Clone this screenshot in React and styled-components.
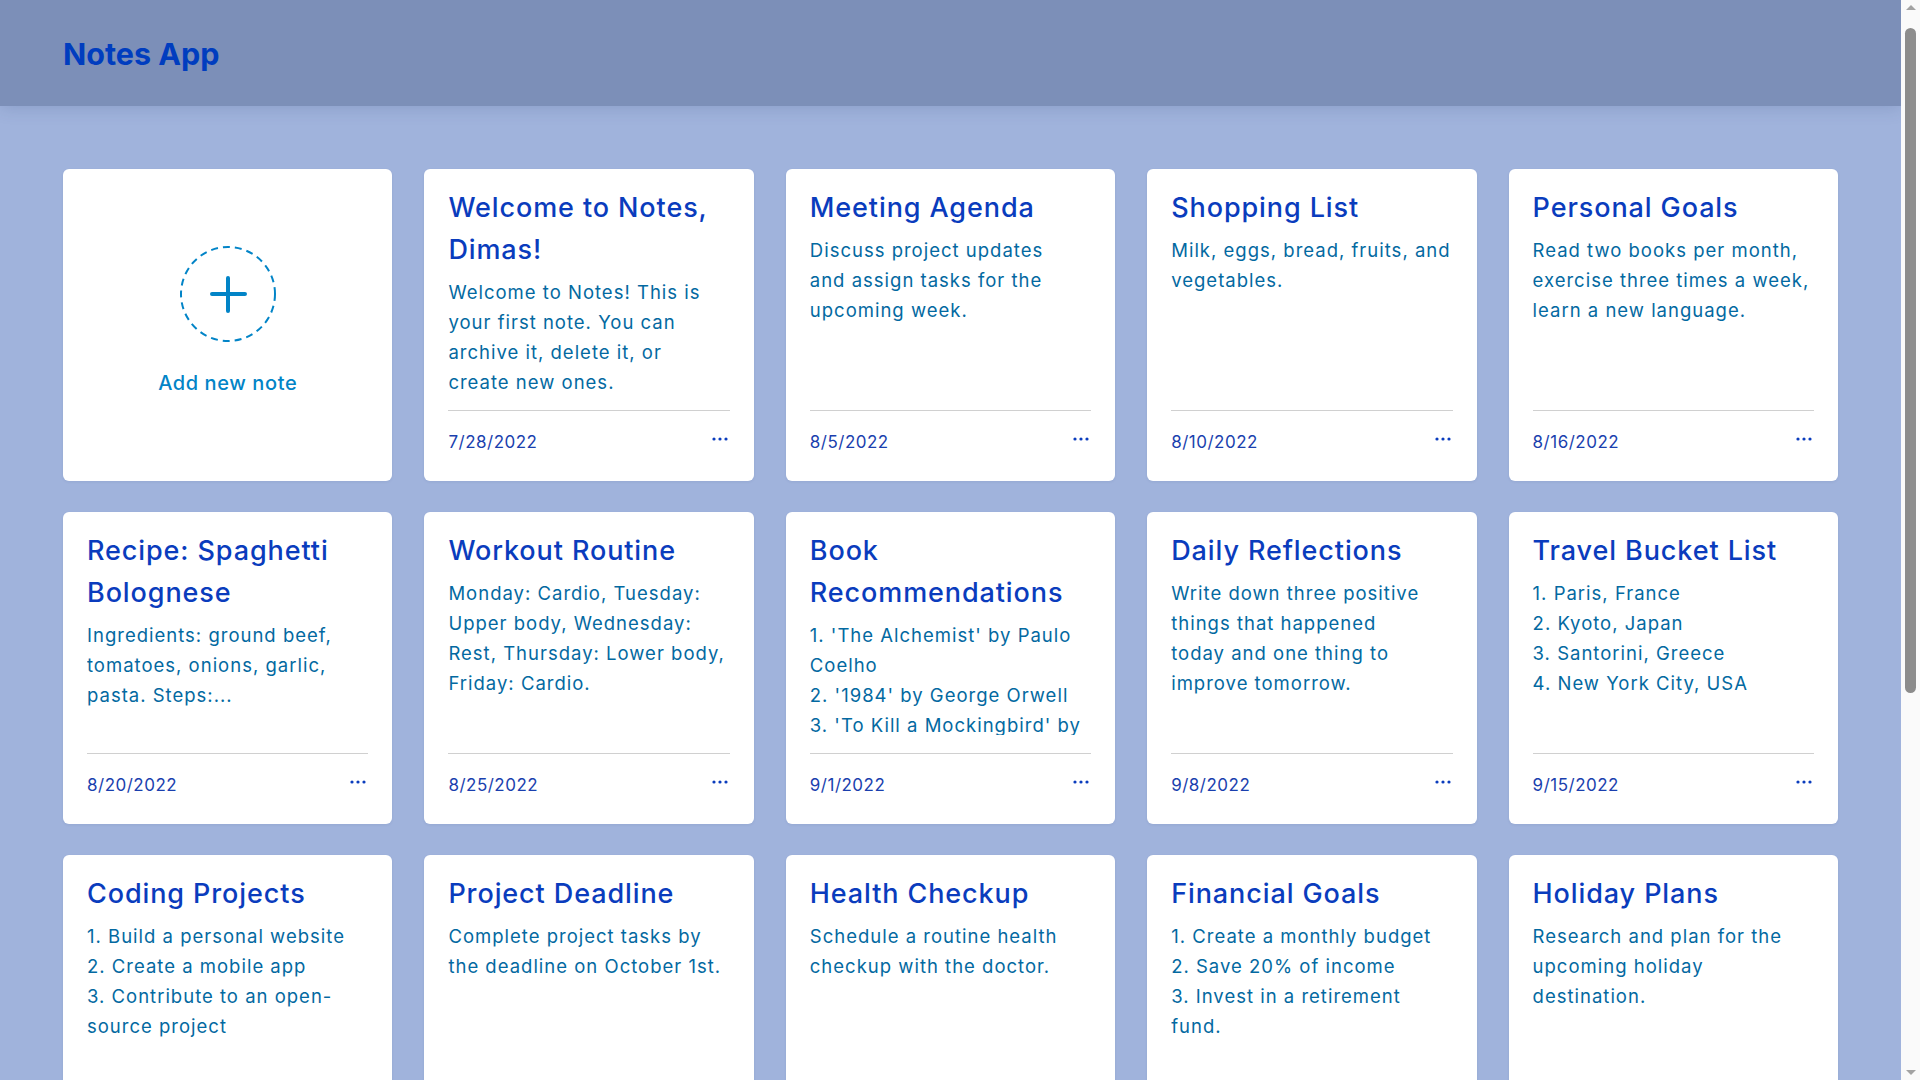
import React from "react"
import styled, { createGlobalStyle } from "styled-components"

// line breaks follow the wrapping of the original layout
const notes = [
  { title: "Welcome to Notes, Dimas!", body: "Welcome to Notes! This is\nyour first note. You can\narchive it, delete it, or\ncreate new ones.", date: "7/28/2022" },
  { title: "Meeting Agenda", body: "Discuss project updates\nand assign tasks for the\nupcoming week.", date: "8/5/2022" },
  { title: "Shopping List", body: "Milk, eggs, bread, fruits, and\nvegetables.", date: "8/10/2022" },
  { title: "Personal Goals", body: "Read two books per month,\nexercise three times a week,\nlearn a new language.", date: "8/16/2022" },
  { title: "Recipe: Spaghetti Bolognese", body: "Ingredients: ground beef, tomatoes, onions, garlic, pasta. Steps:...", date: "8/20/2022" },
  { title: "Workout Routine", body: "Monday: Cardio, Tuesday: Upper body, Wednesday: Rest, Thursday: Lower body, Friday: Cardio.", date: "8/25/2022" },
  { title: "Book Recommendations", body: "1. 'The Alchemist' by Paulo Coelho\n2. '1984' by George Orwell\n3. 'To Kill a Mockingbird' by Harper Lee", date: "9/1/2022" },
  { title: "Daily Reflections", body: "Write down three positive\nthings that happened\ntoday and one thing to\nimprove tomorrow.", date: "9/8/2022" },
  { title: "Travel Bucket List", body: "1. Paris, France\n2. Kyoto, Japan\n3. Santorini, Greece\n4. New York City, USA", date: "9/15/2022" },
  { title: "Coding Projects", body: "1. Build a personal website\n2. Create a mobile app\n3. Contribute to an open-source project", date: "9/22/2022" },
  { title: "Project Deadline", body: "Complete project tasks by\nthe deadline on October 1st.", date: "9/28/2022" },
  { title: "Health Checkup", body: "Schedule a routine health\ncheckup with the doctor.", date: "10/5/2022" },
  { title: "Financial Goals", body: "1. Create a monthly budget\n2. Save 20% of income\n3. Invest in a retirement\nfund.", date: "10/12/2022" },
  { title: "Holiday Plans", body: "Research and plan for the\nupcoming holiday\ndestination.", date: "10/20/2022" },
  { title: "Gift Ideas", body: "Books, a new watch, and concert tickets for the family.", date: "10/28/2022" },
]

const GlobalStyle = createGlobalStyle`
  body {
    margin: 0;
    padding-right: 19px;
    background: #a0b3dc;
    font-family: Inter, "Open Sans", sans-serif;
  }
`

const App = () => (
  <>
    <GlobalStyle />
    <Header>
      <Brand>Notes App</Brand>
    </Header>
    <Main>
      <Grid>
        <AddCard>
          <AddIcon />
          <AddLabel>Add new note</AddLabel>
        </AddCard>
        {notes.map(note => (
          <Note key={note.title} {...note} />
        ))}
      </Grid>
    </Main>
    <Scrollbar>
      <Arrow />
      <Track>
        <Thumb />
      </Track>
      <Arrow $down />
    </Scrollbar>
  </>
)

export default App

const Note = ({ title, body, date }) => (
  <Card>
    <Content>
      <Title>{title}</Title>
      <Body>{body}</Body>
    </Content>
    <Footer>
      <DateText>{date}</DateText>
      <MoreButton aria-label="more">
        <svg width="16" height="4" viewBox="0 0 16 4">
          <circle cx="2" cy="2" r="1.6" fill="currentColor" />
          <circle cx="8" cy="2" r="1.6" fill="currentColor" />
          <circle cx="14" cy="2" r="1.6" fill="currentColor" />
        </svg>
      </MoreButton>
    </Footer>
  </Card>
)

const AddIcon = () => (
  <svg width="98" height="98" viewBox="0 0 98 98">
    <circle cx="49" cy="49" r="47" fill="none" stroke="#0284c7" strokeWidth="2" strokeDasharray="7 5" />
    <path d="M49 33v33M33 49h33" stroke="#0284c7" strokeWidth="4" strokeLinecap="round" />
  </svg>
)

const Header = styled.header`
  height: 106px;
  display: flex;
  align-items: center;
  padding: 0 63px;
  background: #7c8fb8;
  box-shadow: 0 2px 16px rgba(40, 60, 110, 0.18);
`

const Brand = styled.h1`
  margin: 0;
  font-size: 30.5px;
  font-weight: 700;
  color: #003dbf;
`

const Main = styled.main`
  padding: 63px 63px 190px;
`

const Grid = styled.div`
  display: grid;
  grid-template-columns: repeat(5, 1fr);
  gap: 31px 32px;
`

const Card = styled.div`
  height: 312px;
  box-sizing: border-box;
  padding: 16px 24px;
  background: #fff;
  border-radius: 6px;
  box-shadow: 0 1px 3px rgba(30, 50, 100, 0.08);
  display: flex;
  flex-direction: column;
`

const AddCard = styled(Card)`
  align-items: center;
  justify-content: center;
  gap: 28px;
  padding-bottom: 26px;
  cursor: pointer;
`

const AddLabel = styled.span`
  font-size: 20px;
  line-height: 24px;
  font-weight: 500;
  letter-spacing: 0.6px;
  color: #0284c7;
`

const Content = styled.div`
  flex: 1;
  min-height: 0;
  overflow: hidden;
`

const Title = styled.h2`
  margin: 2px 0 6px;
  font-size: 27px;
  line-height: 42px;
  font-weight: 500;
  letter-spacing: 0.9px;
  color: #0a3cbd;
`

const Body = styled.p`
  margin: 0;
  font-size: 18.5px;
  line-height: 30px;
  letter-spacing: 1px;
  color: #0369a1;
  white-space: pre-line;
`

const Footer = styled.div`
  margin-top: 18px;
  padding: 16px 0 8px;
  border-top: 1px solid #d0d0d0;
  display: flex;
  align-items: center;
  justify-content: space-between;
`

const DateText = styled.span`
  font-size: 17px;
  line-height: 30px;
  letter-spacing: 0.5px;
  color: #1a3fae;
`

const MoreButton = styled.button`
  border: 0;
  padding: 0 2px 6px;
  background: none;
  color: #0a3cbd;
  display: flex;
  cursor: pointer;
`

const Scrollbar = styled.div`
  position: fixed;
  top: 0;
  right: 0;
  width: 19px;
  height: 100vh;
  background: #fafafa;
  display: flex;
  flex-direction: column;
  align-items: center;
`

const Arrow = styled.div`
  flex: none;
  margin: ${p => (p.$down ? "6px 0 5px" : "5px 0 6px")};
  width: 0;
  height: 0;
  border-left: 5px solid transparent;
  border-right: 5px solid transparent;
  ${p => (p.$down ? "border-top: 5px solid #a3a3a3;" : "border-bottom: 5px solid #a3a3a3;")}
`

const Track = styled.div`
  flex: 1;
  width: 100%;
  display: flex;
  justify-content: center;
  padding-top: 12px;
`

const Thumb = styled.div`
  width: 11px;
  height: 665px;
  border-radius: 6px;
  background: #8c8c8c;
`
